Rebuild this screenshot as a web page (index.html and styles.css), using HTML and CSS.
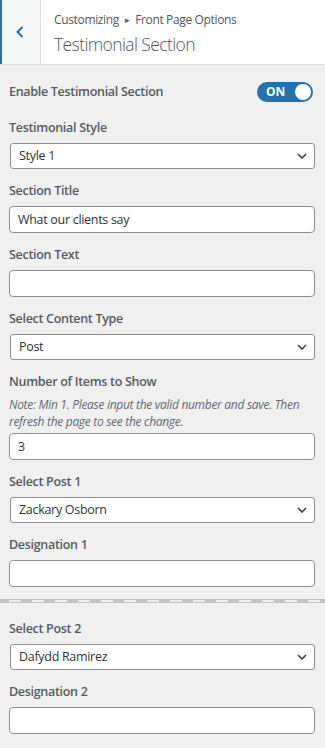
FILE: index.html
```html
<!DOCTYPE html>
<html lang="en">
<head>
<meta charset="utf-8">
<title>Testimonial Section</title>
<link rel="stylesheet" href="styles.css">
</head>
<body>
<div class="panel">
  <header class="head">
    <button class="back" aria-label="Back">
      <svg width="10" height="12" viewBox="0 0 10 12"><path d="M7.5 1 L2.5 6 L7.5 11" fill="none" stroke="#2271b1" stroke-width="2"/></svg>
    </button>
    <div class="head-text">
      <div class="crumb">Customizing <span class="tri">&#9656;</span> Front Page Options</div>
      <div class="title">Testimonial Section</div>
    </div>
  </header>
  <main class="controls">
    <div class="toggle-row">
      <span class="label">Enable Testimonial Section</span>
      <span class="switch"><span class="on">ON</span><span class="knob"></span></span>
    </div>

    <div class="field">
      <div class="label">Testimonial Style</div>
      <div class="select"><span>Style 1</span><svg class="chev" width="10" height="6" viewBox="0 0 10 6"><path d="M1 1 L5 5 L9 1" fill="none" stroke="#3c434a" stroke-width="1.6"/></svg></div>
    </div>

    <div class="field">
      <div class="label">Section Title</div>
      <div class="input">What our clients say</div>
    </div>

    <div class="field">
      <div class="label">Section Text</div>
      <div class="input"></div>
    </div>

    <div class="field">
      <div class="label">Select Content Type</div>
      <div class="select"><span>Post</span><svg class="chev" width="10" height="6" viewBox="0 0 10 6"><path d="M1 1 L5 5 L9 1" fill="none" stroke="#3c434a" stroke-width="1.6"/></svg></div>
    </div>

    <div class="field">
      <div class="label">Number of Items to Show</div>
      <div class="note">Note: Min 1. Please input the valid number and save. Then refresh the page to see the change.</div>
      <div class="input">3</div>
    </div>

    <div class="field">
      <div class="label">Select Post 1</div>
      <div class="select"><span>Zackary Osborn</span><svg class="chev" width="10" height="6" viewBox="0 0 10 6"><path d="M1 1 L5 5 L9 1" fill="none" stroke="#3c434a" stroke-width="1.6"/></svg></div>
    </div>

    <div class="field">
      <div class="label">Designation 1</div>
      <div class="input"></div>
    </div>

    <div class="sep"></div>

    <div class="field">
      <div class="label">Select Post 2</div>
      <div class="select"><span>Dafydd Ramirez</span><svg class="chev" width="10" height="6" viewBox="0 0 10 6"><path d="M1 1 L5 5 L9 1" fill="none" stroke="#3c434a" stroke-width="1.6"/></svg></div>
    </div>

    <div class="field">
      <div class="label">Designation 2</div>
      <div class="input"></div>
    </div>
  </main>
</div>
</body>
</html>
```

FILE: styles.css
```css
* { box-sizing: border-box; }
html, body { margin: 0; padding: 0; }
body {
  background: #f0f0f1;
  font-family: "Open Sans", "Noto Sans", sans-serif;
  color: #50575e;
  width: 325px;
  height: 748px;
  overflow: hidden;
}
.head {
  display: flex;
  height: 65px;
  background: #fff;
  border-bottom: 1px solid #dcdcde;
}
.back {
  width: 41px;
  height: 64px;
  padding: 0;
  margin: 0;
  background: #f6f7f7;
  border: 0;
  border-left: 2px solid #2271b1;
  border-right: 1px solid #dcdcde;
  display: flex;
  align-items: center;
  justify-content: center;
}
.back svg { margin-left: -3px; margin-top: -1px; }
.head-text {
  padding: 10px 0 0 13px;
}
.crumb {
  font-size: 12px;
  letter-spacing: -0.35px;
  line-height: 20px;
  color: #50575e;
}
.tri { font-size: 9px; position: relative; top: -1px; padding: 0 3px; }
.title {
  font-size: 17.5px;
  letter-spacing: -0.6px;
  font-weight: 300;
  line-height: 26px;
  color: #50575e;
}
.controls {
  padding: 17px 10px 0 9px;
}
.toggle-row {
  display: flex;
  align-items: center;
  justify-content: space-between;
  height: 20px;
  margin-bottom: 16px;
}
.label {
  font-size: 12.5px;
  letter-spacing: -0.3px;
  font-weight: 600;
  line-height: 20px;
  color: #555b61;
}
.switch {
  width: 56px;
  height: 20px;
  border-radius: 10px;
  background: #2271b1;
  display: flex;
  align-items: center;
  justify-content: space-between;
  padding: 0 2px 0 9px;
  margin-right: 2px;
}
.on {
  color: #fff;
  font-size: 12px;
  font-weight: 700;
  line-height: 20px;
}
.knob {
  width: 16px;
  height: 16px;
  border-radius: 50%;
  background: #fff;
}
.field {
  margin-bottom: 12px;
}
.field .label { margin-bottom: 5px; }
.input, .select {
  height: 27px;
  background: #fff;
  border: 1px solid #8c8f94;
  border-radius: 4px;
  font-size: 12.5px;
  letter-spacing: -0.3px;
  line-height: 25px;
  color: #2c3338;
  padding: 0 8px;
}
.select {
  height: 26px;
  line-height: 24px;
  margin-left: 1px;
  border-radius: 3px;
  display: flex;
  justify-content: space-between;
  align-items: center;
  padding: 0 7px 0 8px;
}
.note {
  font-size: 12px;
  letter-spacing: -0.3px;
  font-style: italic;
  line-height: 17px;
  color: #646970;
  margin: -1px 0 3px;
}
.sep {
  height: 4px;
  margin: 3px -10px 16px -9px;
  border-top: 1px solid #c3c4c7;
  border-bottom: 1px solid #c3c4c7;
  background: repeating-linear-gradient(90deg, #c3c4c7 0 9px, #ececec 9px 21px, #c3c4c7 21px 23px);
}
```
